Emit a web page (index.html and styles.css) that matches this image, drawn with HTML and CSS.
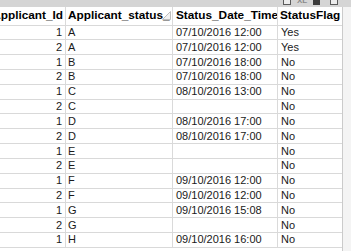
FILE: index.html
```html
<!DOCTYPE html>
<html>
<head>
<meta charset="utf-8">
<link rel="stylesheet" href="styles.css">
</head>
<body>
<div class="frame">
  <div class="topbar">
    <span class="ic box"></span>
    <span class="ic xl">XL</span>
    <span class="ic fill"></span>
    <span class="ic box last"></span>
  </div>
  <div class="main">
    <div class="table">
      <div class="row head">
        <div class="c c1 hnum"><span>Applicant_Id</span></div>
        <div class="c c2 hsort"><span>Applicant_status_</span>
          <svg class="sort" width="9" height="9" viewBox="0 0 9 9"><path d="M0.5 8.5 L8.5 0.5 L8.5 8.5 Z" fill="#f2f2f2" stroke="#bdbdbd" stroke-width="1"/></svg>
        </div>
        <div class="c c3"><span>Status_Date_Time</span></div>
        <div class="c c4"><span>StatusFlag</span></div>
      </div>
      <div class="row"><div class="c c1">1</div><div class="c c2">A</div><div class="c c3">07/10/2016 12:00</div><div class="c c4">Yes</div></div>
      <div class="row"><div class="c c1">2</div><div class="c c2">A</div><div class="c c3">07/10/2016 12:00</div><div class="c c4">Yes</div></div>
      <div class="row"><div class="c c1">1</div><div class="c c2">B</div><div class="c c3">07/10/2016 18:00</div><div class="c c4">No</div></div>
      <div class="row"><div class="c c1">2</div><div class="c c2">B</div><div class="c c3">07/10/2016 18:00</div><div class="c c4">No</div></div>
      <div class="row"><div class="c c1">1</div><div class="c c2">C</div><div class="c c3">08/10/2016 13:00</div><div class="c c4">No</div></div>
      <div class="row"><div class="c c1">2</div><div class="c c2">C</div><div class="c c3"></div><div class="c c4">No</div></div>
      <div class="row"><div class="c c1">1</div><div class="c c2">D</div><div class="c c3">08/10/2016 17:00</div><div class="c c4">No</div></div>
      <div class="row"><div class="c c1">2</div><div class="c c2">D</div><div class="c c3">08/10/2016 17:00</div><div class="c c4">No</div></div>
      <div class="row"><div class="c c1">1</div><div class="c c2">E</div><div class="c c3"></div><div class="c c4">No</div></div>
      <div class="row"><div class="c c1">2</div><div class="c c2">E</div><div class="c c3"></div><div class="c c4">No</div></div>
      <div class="row"><div class="c c1">1</div><div class="c c2">F</div><div class="c c3">09/10/2016 12:00</div><div class="c c4">No</div></div>
      <div class="row"><div class="c c1">2</div><div class="c c2">F</div><div class="c c3">09/10/2016 12:00</div><div class="c c4">No</div></div>
      <div class="row"><div class="c c1">1</div><div class="c c2">G</div><div class="c c3">09/10/2016 15:08</div><div class="c c4">No</div></div>
      <div class="row"><div class="c c1">2</div><div class="c c2">G</div><div class="c c3"></div><div class="c c4">No</div></div>
      <div class="row"><div class="c c1">1</div><div class="c c2">H</div><div class="c c3">09/10/2016 16:00</div><div class="c c4">No</div></div>
    </div>
    <div class="side"></div>
  </div>
</div>
</body>
</html>
```

FILE: styles.css
```css
html, body {
  margin: 0;
  padding: 0;
  background: #ffffff;
}
.frame {
  width: 351px;
  height: 251px;
  overflow: hidden;
  display: flex;
  flex-direction: column;
  font-family: "Liberation Sans", Arial, sans-serif;
}
.topbar {
  height: 7px;
  flex: none;
  background: #d5d5d5;
  display: flex;
  justify-content: flex-end;
  align-items: flex-end;
  padding: 0 13px 2px 0;
  box-sizing: border-box;
  overflow: hidden;
}
.ic {
  flex: none;
  box-sizing: border-box;
}
.box {
  width: 8px;
  height: 9px;
  border: 1px solid #5a5a5a;
  background: #ececec;
  margin-right: 6px;
}
.box.last {
  margin-right: 0;
  margin-left: 10px;
}
.xl {
  font-size: 8px;
  line-height: 8px;
  height: 8px;
  color: #8a8a8a;
  font-weight: bold;
  width: 10px;
  margin-right: 6px;
}
.fill {
  width: 7px;
  height: 9px;
  background: #3c3c3c;
}
.main {
  flex: 1;
  display: flex;
  min-height: 0;
}
.table {
  width: 343px;
  flex: none;
  display: flex;
  flex-direction: column;
  border-right: 1px solid #cbcbcb;
  box-sizing: border-box;
  background: #ffffff;
}
.side {
  flex: 1;
  background: #f4f4f4;
}
.row {
  display: grid;
  grid-template-columns: 66px 107px 105px 64px;
  height: 14.82px;
  box-sizing: border-box;
  border-bottom: 1px solid #d9d9d9;
  font-size: 11px;
  color: #1a1a1a;
  flex: none;
}
.row.head {
  height: 18.6px;
  font-size: 11.8px;
  font-weight: bold;
  color: #000000;
}
.c {
  box-sizing: border-box;
  border-right: 1px solid #dadada;
  padding-left: 3px;
  white-space: nowrap;
  overflow: clip;
  display: flex;
  align-items: center;
  line-height: 13px;
}
.c4 {
  border-right: none;
}
.head .c4 {
  padding-left: 2px;
}
.c1 {
  justify-content: flex-end;
  padding-left: 0;
  padding-right: 3px;
}
.c2 {
  padding-left: 2px;
}
.hnum {
  padding-right: 2px;
}
.hnum span {
  flex: none;
}
.hsort {
  position: relative;
}
.sort {
  position: absolute;
  right: 1px;
  top: 4px;
}
```
